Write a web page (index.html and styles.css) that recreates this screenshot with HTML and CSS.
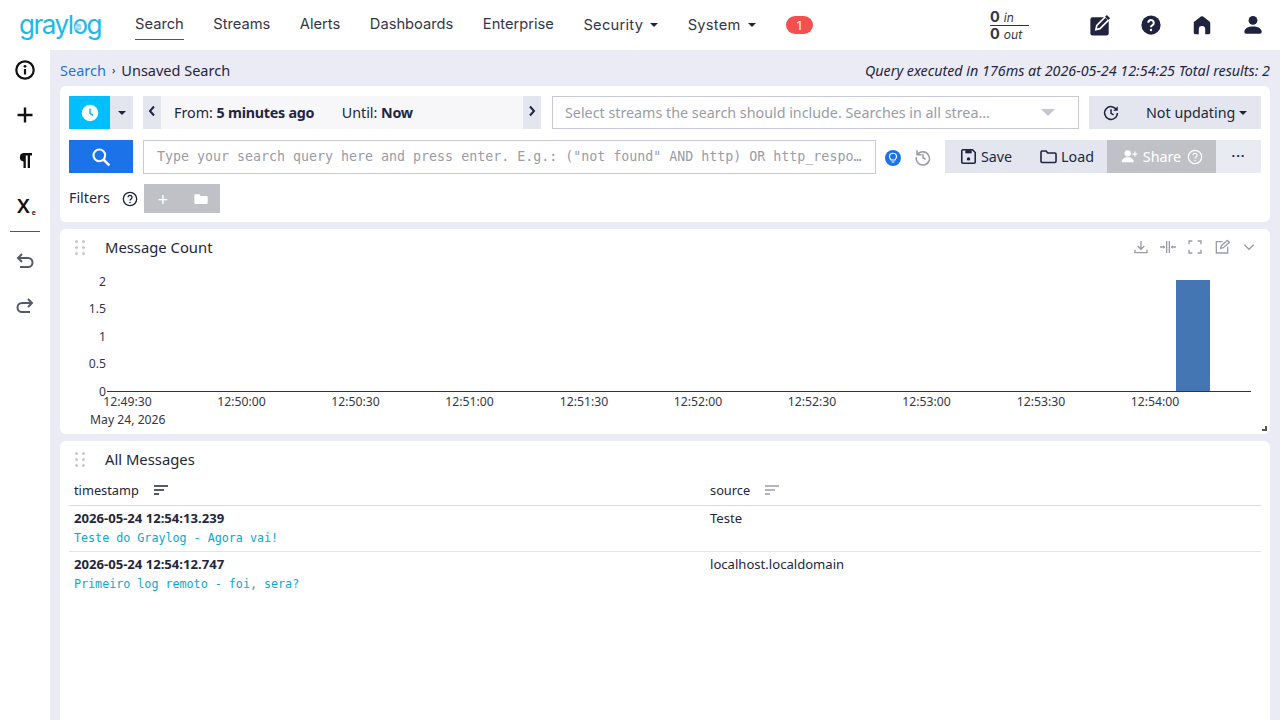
FILE: index.html
```html
<!DOCTYPE html>
<html lang="en">
<head>
<meta charset="utf-8">
<title>Graylog - Search</title>
<link rel="stylesheet" href="styles.css">
</head>
<body>
<header class="topnav">
  <a class="logo">graylog<svg class="logo-mark" viewBox="0 0 8 8"><circle cx="4" cy="4" r="3.500" fill="#8fd9f4"/><path d="M1.500 4.500l1.500-1 1.500 1.500 2-2" fill="none" stroke="#fff" stroke-width=".8"/></svg></a>
  <nav class="navlinks">
    <a class="navlink active">Search</a>
    <a class="navlink">Streams</a>
    <a class="navlink">Alerts</a>
    <a class="navlink">Dashboards</a>
    <a class="navlink">Enterprise</a>
    <a class="navlink has-caret">Security <i class="caret"></i></a>
    <a class="navlink has-caret">System <i class="caret"></i></a>
    <span class="badge">1</span>
  </nav>
  <div class="throughput">
    <div class="tp-row tp-in"><b>0</b> <em>in</em></div>
    <div class="tp-row"><b>0</b> <em>out</em></div>
  </div>
  <div class="navicons">
    <svg class="navicon" viewBox="0 0 24 24"><rect x="1.500" y="3.500" width="20" height="20" rx="2.500" fill="#1f2340"/><path d="M7.500 17l1-4.500 9.500-9.500 3.500 3.500-9.500 9.500z" fill="#1f2340" stroke="#fff" stroke-width="1.800"/><path d="M19.500 1l3.500 3.500-2 2L17.500 3z" fill="#1f2340"/></svg>
    <svg class="navicon" viewBox="0 0 24 24"><circle cx="12" cy="12" r="10.500" fill="#1f2340"/><path fill="none" stroke="#fff" stroke-width="2.200" d="M9 9.600a3 3 0 1 1 4.600 2.500c-1 .6-1.600 1.100-1.600 2.300"/><circle cx="12" cy="17.400" r="1.300" fill="#fff"/></svg>
    <svg class="navicon" viewBox="0 0 24 24"><path fill="#1f2340" d="M10.800 2.800a2 2 0 0 1 2.400 0l7 5.500a2 2 0 0 1 .8 1.600V20.500a1.500 1.500 0 0 1-1.500 1.500H15.500V16.500a3.500 3.500 0 0 0-7 0V22H4.500A1.500 1.500 0 0 1 3 20.500V9.900a2 2 0 0 1 .8-1.600z"/></svg>
    <svg class="navicon" viewBox="0 0 24 24"><circle cx="12" cy="7" r="4.800" fill="#1f2340"/><path fill="#1f2340" d="M2.500 19.500c0-4 4.500-6 9.500-6s9.500 2 9.500 6a2 2 0 0 1-2 2H4.500a2 2 0 0 1-2-2z"/></svg>
  </div>
</header>

<div class="shell">
  <aside class="sidebar">
    <div class="side-item"><svg class="sideicon" viewBox="0 0 24 24"><circle cx="12" cy="12" r="8.700" fill="none" stroke="#111" stroke-width="2.200"/><rect x="10.900" y="11" width="2.200" height="5.500" fill="#111"/><circle cx="12" cy="8.300" r="1.400" fill="#111"/></svg></div>
    <div class="side-item"><svg class="sideicon" viewBox="0 0 24 24"><path stroke="#111" stroke-width="2.400" d="M12 4.500v15M4.500 12h15"/></svg></div>
    <div class="side-item"><svg class="sideicon" viewBox="0 0 24 24"><path fill="#111" d="M10 5h9v2.400h-2V20h-2.300V7.400h-1.900V20h-2.300v-6.500a4.300 4.300 0 0 1 0-8.500z"/></svg></div>
    <div class="side-item"><span class="xsub">X<small>e</small></span></div>
    <hr class="side-rule">
    <div class="side-item"><svg class="sideicon" viewBox="0 0 24 24"><path fill="none" stroke="#555a6b" stroke-width="2" d="M9 5L5 9l4 4M5 9h10a4.500 4.500 0 0 1 0 9H7"/></svg></div>
    <div class="side-item"><svg class="sideicon" viewBox="0 0 24 24"><path fill="none" stroke="#555a6b" stroke-width="2" d="M15 5l4 4-4 4M19 9H9a4.500 4.500 0 0 0 0 9h8"/></svg></div>
  </aside>

  <main class="content">
    <div class="crumbs">
      <div class="crumb-left"><a class="crumb-link">Search</a><span class="crumb-sep">›</span><span>Unsaved Search</span></div>
      <div class="query-info">Query executed in 176ms at 2026-05-24 12:54:25 Total results: 2</div>
    </div>

    <section class="card search-card">
      <div class="search-row row-one">
        <div class="range-group">
          <button class="btn-clock"><svg class="clock" viewBox="0 0 24 24"><circle cx="12" cy="12" r="11" fill="#fff"/><path fill="none" stroke="#00bfff" stroke-width="2" d="M12 6v6.500l4 2.500"/></svg></button>
          <button class="btn-drop"><i class="caret dark"></i></button>
        </div>
        <div class="range">
          <button class="range-arrow"><svg viewBox="0 0 8 12" class="chev"><path d="M6 1.500L2 6l4 4.500" fill="none" stroke="#1f2340" stroke-width="2"/></svg></button>
          <div class="range-text">
            <span class="range-from">From: <b>5 minutes ago</b></span>
            <span>Until: <b>Now</b></span>
          </div>
          <button class="range-arrow"><svg viewBox="0 0 8 12" class="chev"><path d="M2 1.500L6 6l-4 4.500" fill="none" stroke="#1f2340" stroke-width="2"/></svg></button>
        </div>
        <div class="streams">
          <span class="streams-text">Select streams the search should include. Searches in all strea…</span>
          <i class="streams-caret"></i>
        </div>
        <div class="refresh">
          <svg class="refresh-icon" viewBox="0 0 24 24"><path fill="none" stroke="#1f2340" stroke-width="2" d="M19.500 8A8.500 8.500 0 1 0 20.500 12M12 7v5.500l3.500 2"/><path fill="#1f2340" d="M21 3v6h-6z"/></svg>
          <span class="refresh-label">Not updating</span><i class="caret dark"></i>
        </div>
      </div>

      <div class="search-row row-two">
        <button class="btn-search"><svg class="search-icon" viewBox="0 0 24 24"><circle cx="10" cy="10" r="7" fill="none" stroke="#fff" stroke-width="2.500"/><path stroke="#fff" stroke-width="3" d="M15 15l7 7"/></svg></button>
        <div class="query">Type your search query here and press enter. E.g.: ("not found" AND http) OR http_respo…</div>
        <svg class="bulb" viewBox="0 0 16 16"><circle cx="8" cy="8" r="8" fill="#1a73e8"/><path fill="none" stroke="#fff" stroke-width="1.100" d="M6 10c0-1-1.500-1.500-1.500-3.300a3.500 3.500 0 0 1 7 0C11.500 8.500 10 9 10 10zM6.500 12h3"/></svg>
        <svg class="history" viewBox="0 0 24 24"><path fill="none" stroke="#9a9ca6" stroke-width="2" d="M4 3v6h6M4.500 9A8.800 8.800 0 1 1 3.200 12M12 7.500V13l3.500 2"/></svg>
        <div class="actions">
          <button class="act"><svg class="act-icon" viewBox="0 0 24 24"><path fill="none" stroke="#1f2340" stroke-width="2" d="M5 3.500h12l3.500 3.500v12a1.500 1.500 0 0 1-1.500 1.500H5A1.500 1.500 0 0 1 3.500 19V5A1.500 1.500 0 0 1 5 3.500z"/><rect x="8" y="4" width="8" height="4" fill="#1f2340"/><circle cx="12" cy="15" r="2.200" fill="#1f2340"/></svg>Save</button>
          <button class="act"><svg class="act-icon" viewBox="0 0 24 24"><path fill="none" stroke="#1f2340" stroke-width="2" d="M2.500 6.500A1.500 1.500 0 0 1 4 5h5l2 2.500h9A1.500 1.500 0 0 1 21.500 9v9a1.500 1.500 0 0 1-1.500 1.500H4A1.500 1.500 0 0 1 2.500 18z"/></svg>Load</button>
          <button class="act act-share"><svg class="share-icon" viewBox="0 0 24 24"><circle cx="9.500" cy="7.500" r="4.500" fill="#fff"/><path fill="#fff" d="M1 20c0-4.500 3.500-7 8.500-7s8.500 2.500 8.500 7z"/><path stroke="#fff" stroke-width="1.800" d="M19.500 5v7M16 8.500h7"/></svg>Share<svg class="share-help" viewBox="0 0 24 24"><circle cx="12" cy="12" r="10" fill="none" stroke="#fff" stroke-width="1.800"/><path fill="none" stroke="#fff" stroke-width="1.800" d="M9 9.500a3 3 0 1 1 4.500 2.600c-1 .6-1.500 1.100-1.500 2.200"/><circle cx="12" cy="17.300" r="1.100" fill="#fff"/></svg></button>
          <button class="act act-more"><span class="dots">···</span></button>
        </div>
      </div>

      <div class="search-row row-three">
        <span class="filters-label">Filters</span>
        <svg class="filters-help" viewBox="0 0 24 24"><circle cx="12" cy="12" r="10" fill="none" stroke="#1f2340" stroke-width="2"/><path fill="none" stroke="#1f2340" stroke-width="2" d="M9 9.500a3 3 0 1 1 4.500 2.600c-1 .6-1.500 1.100-1.500 2.200"/><circle cx="12" cy="17.300" r="1.200" fill="#1f2340"/></svg>
        <div class="filter-btns">
          <span class="filter-plus">+</span>
          <svg class="filter-folder" viewBox="0 0 24 24"><path fill="#fff" d="M2 6.500A1.500 1.500 0 0 1 3.500 5h6l2 2.500h9A1.500 1.500 0 0 1 22 9v9a1.500 1.500 0 0 1-1.500 1.500h-17A1.500 1.500 0 0 1 2 18z"/></svg>
        </div>
      </div>
    </section>

    <section class="card chart-card">
      <div class="widget-head">
        <span class="grip"><i></i><i></i><i></i><i></i><i></i><i></i></span>
        <h2 class="widget-title">Message Count</h2>
        <div class="widget-tools">
          <svg class="tool" viewBox="0 0 24 24"><path fill="none" stroke="#9a9ca6" stroke-width="2" d="M12 3v12M7 10.500l5 5 5-5M3 16v4.500h18V16"/></svg>
          <svg class="tool" viewBox="0 0 24 24"><path fill="none" stroke="#9a9ca6" stroke-width="2" d="M10 3v18M14 3v18M0 12h6M24 12h-6"/><path fill="#9a9ca6" d="M8 12l-3-3v6zM16 12l3-3v6z"/></svg>
          <svg class="tool" viewBox="0 0 24 24"><path fill="none" stroke="#9a9ca6" stroke-width="2" d="M3 8V3h5M16 3h5v5M21 16v5h-5M8 21H3v-5"/></svg>
          <svg class="tool" viewBox="0 0 24 24"><path fill="none" stroke="#9a9ca6" stroke-width="2" d="M13 4H3.500v17h17v-9.500M10 14l1-4 9-8 3 3-9 8z"/></svg>
          <svg class="tool" viewBox="0 0 24 24"><path fill="none" stroke="#9a9ca6" stroke-width="2" d="M5 8.500l7 7 7-7"/></svg>
        </div>
      </div>
      <svg class="chart" viewBox="0 0 1210 167" width="1210" height="167">
        <rect class="bar" x="1116" y="15" width="34" height="111"/>
        <path class="axis" d="M47 126.500H1191"/>
        <g class="tick-y">
          <text x="46" y="21" text-anchor="end">2</text>
          <text x="46" y="48" text-anchor="end">1.5</text>
          <text x="46" y="76" text-anchor="end">1</text>
          <text x="46" y="103" text-anchor="end">0.5</text>
          <text x="46" y="131" text-anchor="end">0</text>
        </g>
        <g class="tick-x">
          <text x="67.500" y="141" text-anchor="middle">12:49:30</text>
          <text x="181.500" y="141" text-anchor="middle">12:50:00</text>
          <text x="295.500" y="141" text-anchor="middle">12:50:30</text>
          <text x="409.500" y="141" text-anchor="middle">12:51:00</text>
          <text x="524" y="141" text-anchor="middle">12:51:30</text>
          <text x="638" y="141" text-anchor="middle">12:52:00</text>
          <text x="752" y="141" text-anchor="middle">12:52:30</text>
          <text x="866.500" y="141" text-anchor="middle">12:53:00</text>
          <text x="981" y="141" text-anchor="middle">12:53:30</text>
          <text x="1095" y="141" text-anchor="middle">12:54:00</text>
          <text x="30" y="159">May 24, 2026</text>
        </g>
      </svg>
      <span class="resize"></span>
    </section>

    <section class="card messages-card">
      <div class="widget-head">
        <span class="grip"><i></i><i></i><i></i><i></i><i></i><i></i></span>
        <h2 class="widget-title">All Messages</h2>
      </div>
      <div class="msg-table">
        <div class="msg-row msg-header">
          <div class="cell-ts">timestamp <svg class="sort dark" viewBox="0 0 14 10"><path stroke="#1f2340" stroke-width="1.500" d="M0 1h14M0 5h10M0 9h5"/></svg></div>
          <div class="cell-src">source <svg class="sort" viewBox="0 0 14 10"><path stroke="#9a9ca6" stroke-width="1.500" d="M0 1h14M0 5h10M0 9h5"/></svg></div>
        </div>
        <div class="msg-row msg-data">
          <div class="cell-ts"><b>2026-05-24 12:54:13.239</b></div>
          <div class="cell-src">Teste</div>
          <code class="msg-text">Teste do Graylog - Agora vai!</code>
        </div>
        <div class="msg-row msg-data">
          <div class="cell-ts"><b>2026-05-24 12:54:12.747</b></div>
          <div class="cell-src">localhost.localdomain</div>
          <code class="msg-text">Primeiro log remoto - foi, sera?</code>
        </div>
      </div>
    </section>
  </main>
</div>
</body>
</html>
```

FILE: styles.css
```css
* { box-sizing: border-box; }
html, body { margin: 0; height: 720px; overflow: hidden; }
body { font-family: "Noto Sans", "Open Sans", sans-serif; font-size: 14.300px; color: #232640; background: #ebebf6; }
button { border: 0; font: inherit; color: inherit; padding: 0; margin: 0; }
svg { display: block; flex: none; }

.topnav { height: 50px; background: #fff; display: flex; align-items: center; padding-left: 19px; }
.logo { position: relative; font-family: "Inter", sans-serif; font-size: 26px; font-weight: 400; letter-spacing: -1.500px; color: #1bb9ec; width: 82px; margin-top: -2px; }
.logo-mark { position: absolute; left: 55px; top: 14px; width: 8px; height: 8px; }
.navlinks { display: flex; align-items: center; margin-left: 34px; width: 855px; font-family: "Inter", sans-serif; font-size: 14.700px; color: #333648; }
.navlink { margin-right: 29.500px; padding: 4px 0 6px; white-space: nowrap; border-bottom: 1px solid transparent; display: flex; align-items: center; gap: 7px; }
.navlink.active { border-bottom-color: #555; }
.has-caret { padding: 5px 0 5px; letter-spacing: .25px; }
.caret { display: inline-block; width: 0; height: 0; border: 4px solid transparent; border-top: 4px solid #1f2340; border-bottom: 0; }
.badge { width: 27px; height: 18px; border-radius: 9px; background: #f4504f; color: #fff; font-size: 12px; display: flex; align-items: center; justify-content: center; margin-left: .5px; }
.throughput { width: 39px; font-family: "Inter", sans-serif; font-size: 14.500px; line-height: 15px; color: #333648; }
.throughput em { font-size: 12px; font-weight: 400; }
.tp-row { white-space: nowrap; }
.tp-in { border-bottom: 1px solid #333; }
.navicons { margin-left: 60px; display: flex; gap: 29px; align-items: center; }
.navicon { width: 22px; height: 22px; }

.shell { display: flex; height: 670px; }
.sidebar { width: 50px; background: #fff; display: flex; flex-direction: column; align-items: center; }
.side-item { height: 40px; width: 50px; margin-bottom: 5px; display: flex; align-items: center; justify-content: center; }
.sideicon { width: 24px; height: 24px; }
.xsub { font-weight: 600; font-size: 20px; color: #111; margin-left: 3px; }
.xsub small { font-size: 7px; margin-left: 2px; vertical-align: -2px; }
.side-rule { width: 30px; border: 0; border-top: 1px solid #555; margin: 1px 0 9px; }

.content { flex: 1; min-width: 0; padding: 0 10px; }
.crumbs { height: 36px; padding-top: 4px; display: flex; justify-content: space-between; align-items: center; }
.crumb-left { display: flex; gap: 6px; align-items: center; font-size: 14.500px; }
.crumb-link { color: #1f74d6; }
.crumb-sep { font-size: 11px; margin-top: -2px; }
.query-info { font-style: italic; }

.card { background: #fff; border-radius: 6px; margin-bottom: 7px; }
.search-card { height: 136px; padding: 10px 9px 0; }
.search-row { display: flex; align-items: center; }
.row-one { height: 33px; }
.row-two { height: 33px; margin-top: 11px; }
.row-three { height: 29px; margin-top: 11px; }

.range-group { display: flex; height: 33px; }
.btn-clock { width: 41px; background: #00bfff; display: flex; align-items: center; justify-content: center; }
.clock { width: 18px; height: 18px; }
.btn-drop { width: 23px; background: #e4e6ef; display: flex; align-items: center; justify-content: center; }
.range { display: flex; margin-left: 10px; width: 398px; height: 33px; background: #f7f7fa; align-items: center; }
.range-arrow { width: 18px; height: 33px; background: #e4e6ef; display: flex; align-items: center; justify-content: center; flex: none; }
.chev { width: 8px; height: 12px; margin-bottom: 3px; }
.range-text { flex: 1; padding-left: 13px; white-space: nowrap; }
.range-text b { letter-spacing: -.25px; }
.range-from { display: inline-block; width: 164px; }
.streams { margin-left: 11px; width: 527px; height: 33px; border: 1px solid #c8c8d8; display: flex; align-items: center; justify-content: space-between; padding: 0 23px 0 12px; }
.streams-text { color: #9a9ca6; white-space: nowrap; }
.streams-caret { width: 0; height: 0; border: 7px solid transparent; border-top: 7px solid #c6c6d6; border-bottom: 0; }
.refresh { margin-left: 10px; width: 172px; height: 33px; background: #e4e6ef; display: flex; align-items: center; padding-left: 13px; }
.refresh-icon { width: 18px; height: 18px; }
.refresh-label { margin-left: 26px; margin-right: 4px; white-space: nowrap; }

.btn-search { width: 64px; height: 33px; background: #1a73e8; display: flex; align-items: center; justify-content: center; }
.search-icon { width: 20px; height: 20px; }
.query { margin-left: 10px; width: 734px; height: 34px; border: 1px solid #c8c8d8; font-family: "DejaVu Sans Mono", monospace; font-size: 13.300px; color: #9a9ca6; display: flex; align-items: center; padding-left: 13px; white-space: nowrap; overflow: hidden; }
.bulb { width: 16px; height: 16px; margin: 3px 0 0 9px; }
.history { width: 18px; height: 18px; margin-left: 13px; }
.actions { display: flex; margin-left: 13px; height: 33px; }
.act { background: #e4e6ef; display: flex; align-items: center; justify-content: center; gap: 3px; height: 33px; width: 81px; }
.act-icon { width: 19px; height: 19px; }
.act-share { background: #c0c1c6; color: #fff; width: 109px; gap: 4px; }
.share-icon { width: 19px; height: 17px; }
.share-help { width: 16px; height: 16px; margin-left: 2px; }
.act-more { width: 45px; background: #e9ebf3; }
.dots { font-weight: 700; letter-spacing: 1px; font-size: 13px; margin-top: -4px; }

.filters-label { margin-bottom: 2px; }
.filters-help { width: 16px; height: 16px; margin-left: 12px; }
.filter-btns { margin-left: 6px; width: 76px; height: 29px; background: #c0c1c6; display: flex; align-items: center; color: #fff; }
.filter-plus { width: 38px; text-align: center; font-size: 18px; }
.filter-folder { width: 16px; height: 16px; margin-left: 11px; }

.chart-card { height: 205px; position: relative; }
.widget-head { height: 36px; display: flex; align-items: center; padding-left: 15px; }
.grip { display: grid; grid-template-columns: 3px 3px; gap: 3px 4px; width: 10px; }
.grip i { width: 3px; height: 3px; border-radius: 50%; background: #c6c6d0; display: block; }
.widget-title { margin: 0 0 0 20px; font-size: 14.800px; font-weight: 400; }
.widget-tools { margin-left: auto; display: flex; align-items: center; gap: 11px; padding-right: 13px; }
.tool { width: 16px; height: 16px; }
.bar { fill: #4476b4; }
.axis { stroke: #333; fill: none; }
.tick-y text, .tick-x text { font-size: 12.200px; fill: #333648; }
.resize { position: absolute; right: 3px; bottom: 3px; width: 5px; height: 5px; border-right: 2px solid #555; border-bottom: 2px solid #555; }

.messages-card { height: 290px; margin-bottom: 0; }
.msg-table { padding: 0 9px; }
.msg-row { display: grid; grid-template-columns: 636px 1fr; padding-left: 5px; }
.msg-header { height: 29px; padding-bottom: 2px; align-items: center; font-size: 12.800px; border-bottom: 1px solid #dcdde3; }
.cell-ts, .cell-src { display: flex; align-items: center; gap: 15px; }
.sort { width: 14px; height: 10px; }
.msg-data { border-bottom: 1px solid #e4e5ea; height: 46px; padding-top: 3px; font-size: 13.100px; line-height: 18px; align-content: start; }
.msg-data:last-child { border-bottom: 0; }
.msg-text { grid-column: 1 / 3; font-family: "DejaVu Sans Mono", monospace; font-size: 11.700px; color: #0aa8d0; line-height: 22px; }
```
